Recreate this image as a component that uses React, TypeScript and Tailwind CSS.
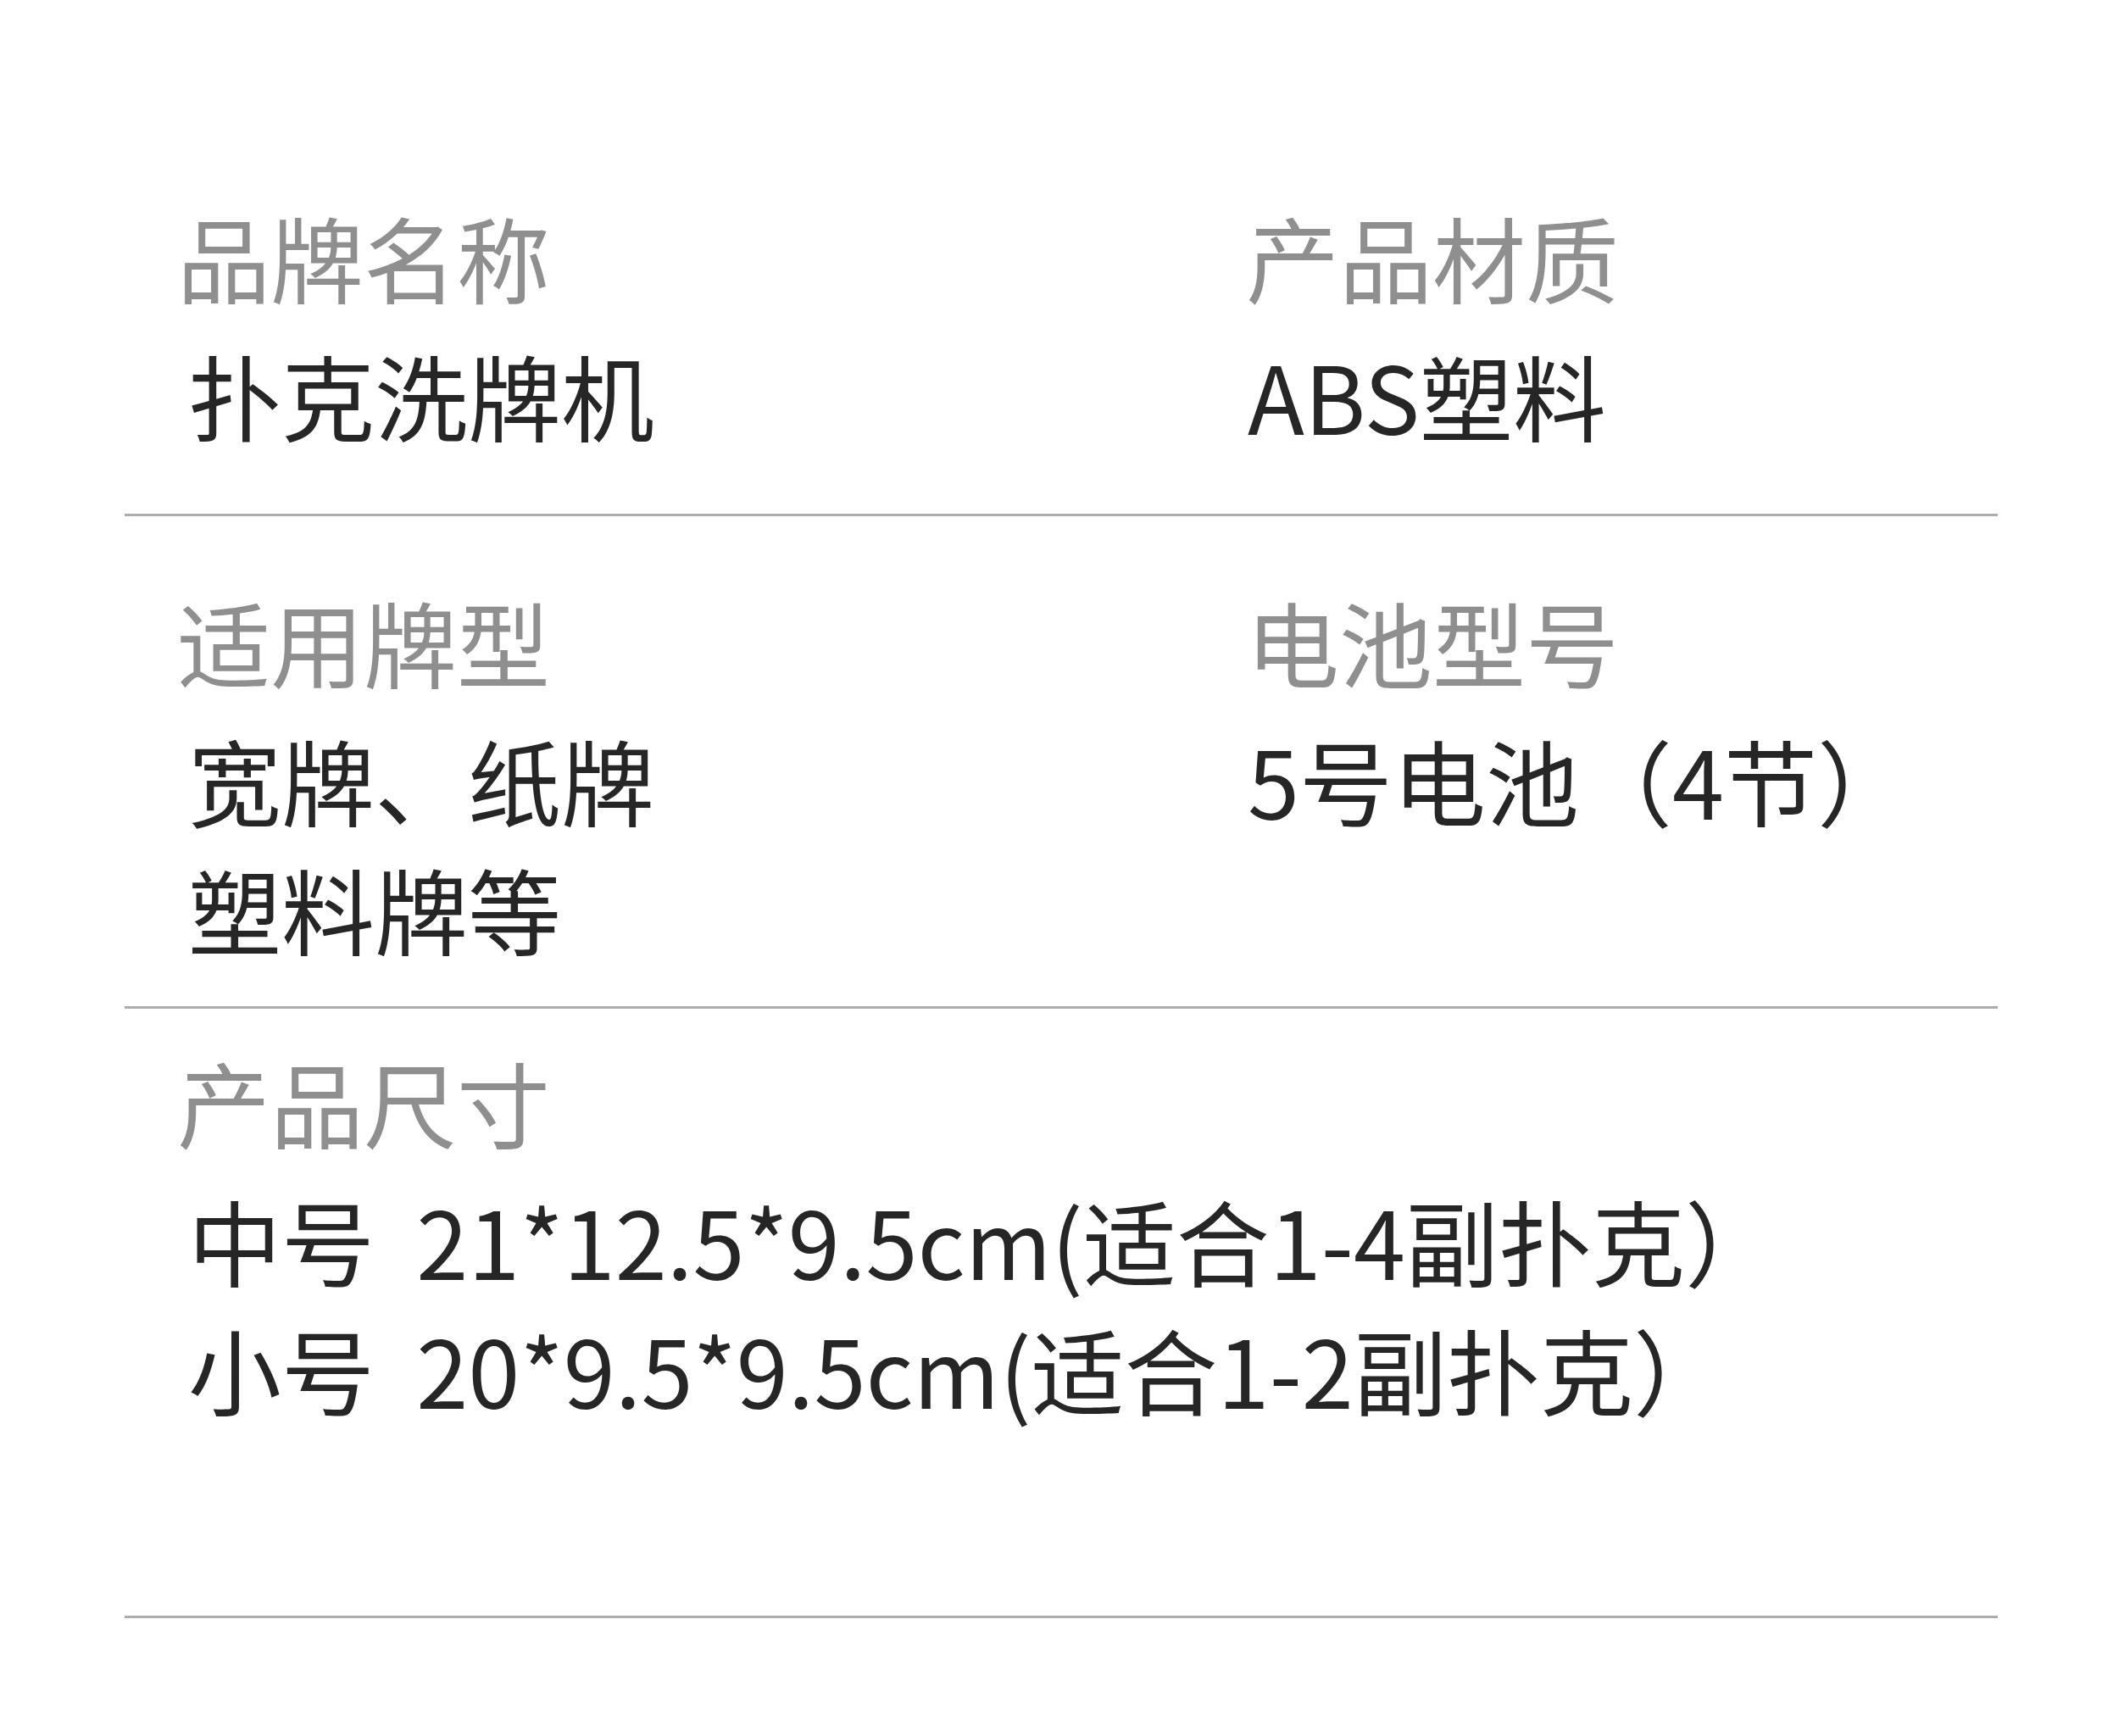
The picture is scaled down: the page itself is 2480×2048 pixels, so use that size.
const FONT = "font-['Noto_Sans_CJK_SC','Noto_Sans',sans-serif]";

type FieldProps = {
  label: string;
  lines: string[];
  right?: boolean;
};

function Field({ label, lines, right }: FieldProps) {
  return (
    <div className="flex flex-col">
      <div
        className={`text-[110px] leading-[152px] font-normal text-[#8f8f8f] ${
          right ? "pl-0" : "pl-[1px]"
        }`}
      >
        {label}
      </div>
      <div
        className={`mt-[11px] text-[110px] leading-[152px] font-normal text-[#262626] ${
          right ? "pl-[2px]" : "pl-[14px]"
        }`}
      >
        {lines.map((line) => (
          <div key={line} className="whitespace-pre">
            {line}
          </div>
        ))}
      </div>
    </div>
  );
}

function Divider() {
  return <div className="ml-[147px] w-[2210px] h-[3px] bg-[#acacac]" />;
}

export default function App() {
  return (
    <div className={`${FONT} w-[2480px] h-[2048px] bg-white overflow-hidden`}>
      <div className="pt-[226px] pl-[208px] grid grid-cols-[1262px_1fr]">
        <Field label="品牌名称" lines={["扑克洗牌机"]} />
        <Field label="产品材质" lines={["ABS塑料"]} right />
      </div>
      <div className="mt-[65px]">
        <Divider />
      </div>
      <div className="pt-[71px] pl-[208px] grid grid-cols-[1262px_1fr]">
        <Field label="适用牌型" lines={["宽牌、纸牌", "塑料牌等"]} />
        <Field label="电池型号" lines={["5号电池（4节）"]} right />
      </div>
      <div className="mt-[40px]">
        <Divider />
      </div>
      <div className="pt-[33px] pl-[208px]">
        <Field
          label="产品尺寸"
          lines={[
            "中号  21*12.5*9.5cm(适合1-4副扑克）",
            "小号  20*9.5*9.5cm(适合1-2副扑克）",
          ]}
        />
      </div>
      <div className="mt-[216px]">
        <Divider />
      </div>
    </div>
  );
}
